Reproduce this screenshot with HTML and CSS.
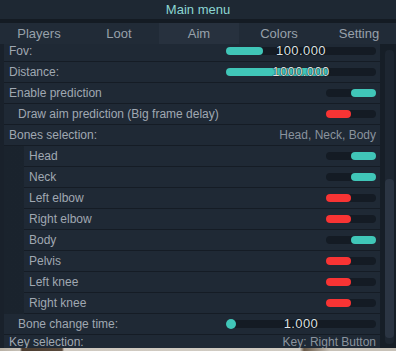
FILE: index.html
```html
<!DOCTYPE html>
<html lang="en">
<head>
  <meta charset="UTF-8" />
  <title>Main menu</title>
  <link rel="stylesheet" href="styles.css">
</head>
<body>
  <div class="menu">
    <div class="title">Main menu</div>
    <div class="tabs">
      <div class="tab">Players</div>
      <div class="tab">Loot</div>
      <div class="tab active">Aim</div>
      <div class="tab">Colors</div>
      <div class="tab">Setting</div>
    </div>
    <div class="content">
      <div class="list">
        <div class="rows">
          <div class="row">
            <span class="label">Fov:</span>
            <div class="slider"><div class="fill" style="width: 37px"></div><span class="value">100.000</span></div>
          </div>
          <div class="row">
            <span class="label">Distance:</span>
            <div class="slider"><div class="fill" style="width: 103px"></div><span class="value">1000.000</span></div>
          </div>
          <div class="row">
            <span class="label">Enable prediction</span>
            <div class="toggle on"><div class="knob"></div></div>
          </div>
          <div class="row">
            <span class="label sub">Draw aim prediction (Big frame delay)</span>
            <div class="toggle off"><div class="knob"></div></div>
          </div>
          <div class="row">
            <span class="label">Bones selection:</span>
            <span class="info">Head, Neck, Body</span>
          </div>
          <div class="group">
            <div class="row">
              <span class="label">Head</span>
              <div class="toggle on"><div class="knob"></div></div>
            </div>
            <div class="row">
              <span class="label">Neck</span>
              <div class="toggle on"><div class="knob"></div></div>
            </div>
            <div class="row">
              <span class="label">Left elbow</span>
              <div class="toggle off"><div class="knob"></div></div>
            </div>
            <div class="row">
              <span class="label">Right elbow</span>
              <div class="toggle off"><div class="knob"></div></div>
            </div>
            <div class="row">
              <span class="label">Body</span>
              <div class="toggle on"><div class="knob"></div></div>
            </div>
            <div class="row">
              <span class="label">Pelvis</span>
              <div class="toggle off"><div class="knob"></div></div>
            </div>
            <div class="row">
              <span class="label">Left knee</span>
              <div class="toggle off"><div class="knob"></div></div>
            </div>
            <div class="row">
              <span class="label">Right knee</span>
              <div class="toggle off"><div class="knob"></div></div>
            </div>
          </div>
          <div class="row">
            <span class="label sub">Bone change time:</span>
            <div class="slider"><div class="dot"></div><span class="value">1.000</span></div>
          </div>
          <div class="row last">
            <span class="label">Key selection:</span>
            <span class="info">Key: Right Button</span>
          </div>
        </div>
      </div>
      <div class="scrollbar"><div class="thumb"></div></div>
    </div>
    <div class="scene"></div>
  </div>
</body>
</html>
```

FILE: styles.css
```css
body {
  margin: 0;
  background: #18202a;
  font-family: "Liberation Sans", Arial, sans-serif;
  overflow: hidden;
}
.menu {
  width: 396px;
  height: 351px;
  display: flex;
  flex-direction: column;
  background: #18202a;
}
.title {
  height: 19px;
  line-height: 19px;
  background: #1e2833;
  color: #8cd6d2;
  font-size: 13px;
  text-align: center;
  border-bottom: 4px solid #141b23;
}
.tabs {
  height: 21px;
  display: grid;
  grid-template-columns: repeat(5, 80px);
  margin-left: -1px;
  background: #212b37;
}
.tab {
  line-height: 21px;
  text-align: center;
  color: #98a1ab;
  font-size: 13px;
  white-space: nowrap;
  overflow: hidden;
}
.tab.active {
  background: #27313e;
}
.content {
  height: 304px;
  display: flex;
  background: #161e27;
}
.list {
  width: 376px;
  padding-left: 4px;
  overflow: hidden;
  background: #19212b;
}
.rows {
  margin-top: -3px;
}
.row {
  height: 20px;
  border-bottom: 1px solid #151c25;
  background: #1f2935;
  display: flex;
  align-items: center;
  justify-content: space-between;
  padding-right: 4px;
}
.row.last {
  align-items: flex-start;
  padding-top: 2px;
}
.row.last span {
  line-height: 11px;
}
.label {
  padding-left: 5px;
  color: #a0a8b2;
  font-size: 12px;
  white-space: nowrap;
}
.label.sub {
  padding-left: 14px;
}
.group {
  padding-left: 20px;
  background: linear-gradient(90deg, #1a232d, #1d2631);
}
.info {
  color: #8a939e;
  font-size: 12px;
}
.slider {
  position: relative;
  width: 150px;
  height: 8px;
  border-radius: 4px;
  background: #141b24;
}
.fill {
  height: 8px;
  border-radius: 4px;
  background: #40c6b8;
}
.dot {
  position: absolute;
  left: 0;
  top: -1px;
  width: 10px;
  height: 10px;
  border-radius: 50%;
  background: #40c6b8;
}
.value {
  position: absolute;
  left: 0;
  right: 0;
  top: -3px;
  text-align: center;
  color: #dde2e6;
  font-size: 13px;
  line-height: 14px;
  letter-spacing: 0.4px;
  text-shadow: 0 0 1px #000, 0 0 1px #000;
}
.toggle {
  width: 50px;
  height: 8px;
  border-radius: 4px;
  background: #141b24;
  display: flex;
}
.knob {
  width: 25px;
  height: 8px;
  border-radius: 4px;
}
.toggle.on {
  justify-content: flex-end;
}
.toggle.on .knob {
  background: #40c6b8;
}
.toggle.off .knob {
  background: #f83434;
}
.scrollbar {
  width: 9px;
  margin: 6px 2px 4px 5px;
  border-radius: 4px;
  background: #1d2631;
  display: flex;
  flex-direction: column;
  justify-content: flex-end;
  padding-bottom: 6px;
}
.thumb {
  height: 159px;
  border-radius: 4px;
  background: #2b3543;
}
.scene {
  height: 3px;
  background: linear-gradient(90deg, #b8b0a4 0, #c6c0b6 20px, #4a3c30 22px, #5a4a3c 62px, #cfc9c0 64px, #d0cbc2 300px, #6a5a48 304px, #c8c2b8 330px);
}
```
